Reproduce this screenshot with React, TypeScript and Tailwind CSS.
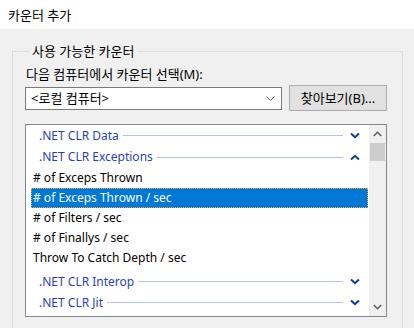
import React from "react";

const FONT = { fontFamily: '"Noto Sans", "Noto Sans CJK KR", sans-serif' };

function Chev({ up = false }: { up?: boolean }) {
  return (
    <svg width="10" height="7" viewBox="0 0 10 7" className="shrink-0">
      <path
        d={up ? "M1 5.5 L5 1.8 L9 5.5" : "M1 1.5 L5 5.2 L9 1.5"}
        fill="none"
        stroke="#12399a"
        strokeWidth="2"
      />
    </svg>
  );
}

function Header({ label, up = false, className = "" }: { label: string; up?: boolean; className?: string }) {
  return (
    <div className={`flex items-center h-[21px] pl-[13px] pr-[9px] ${className}`}>
      <span className="text-[#2b3fb2] whitespace-nowrap">{label}</span>
      <div className="flex-1 h-px bg-[#b6c2e2] ml-[4px] mr-[7px]" />
      <Chev up={up} />
    </div>
  );
}

function Item({ label, selected = false }: { label: string; selected?: boolean }) {
  return (
    <div
      className={`flex items-center h-[20px] ml-[5px] mr-[1px] px-[2px] whitespace-nowrap ${
        selected ? "bg-[#0078d7] text-white outline outline-1 outline-dotted outline-[#f7a52d] -outline-offset-1" : "text-black"
      }`}
    >
      {label}
    </div>
  );
}

export default function App() {
  return (
    <div className="w-[414px] h-[328px] overflow-hidden bg-[#f0f0f0] text-[12px] leading-[16px]" style={FONT}>
      <div className="h-[29px] bg-white flex items-center pl-[8px] text-black text-[13px]">카운터 추가</div>
      <fieldset className="ml-[12px] mr-[11px] mt-[14px] border border-[#dcdcdc] pl-[12px] pr-[15px] pt-[7px] h-[300px]">
        <legend className="ml-[4px] px-[3px] text-black text-[13px]">사용 가능한 카운터</legend>
        <div className="pl-[1px] text-black text-[13px]">다음 컴퓨터에서 카운터 선택(M):</div>
        <div className="flex items-center mt-[3px]">
          <div className="w-[257px] h-[23px] border border-[#7a7a7a] bg-white flex items-center pl-[5px] pr-[6px]">
            <span className="flex-1 text-black text-[13px]">&lt;로컬 컴퓨터&gt;</span>
            <svg width="9" height="5" viewBox="0 0 9 5">
              <path d="M0.5 0.5 L4.5 4.5 L8.5 0.5" fill="none" stroke="#606060" strokeWidth="1" />
            </svg>
          </div>
          <div className="ml-[7px] w-[98px] h-[26px] border border-[#adadad] bg-[#e1e1e1] flex items-center justify-center text-black text-[13px]">
            찾아보기(B)...
          </div>
        </div>
        <div className="mt-[13px] w-[362px] h-[193px] border border-[#828790] bg-white flex">
          <div className="flex-1 flex flex-col">
            <Header label=".NET CLR Data" />
            <Header label=".NET CLR Exceptions" up className="h-[22px]" />
            <Item label="# of Exceps Thrown" />
            <Item label="# of Exceps Thrown / sec" selected />
            <Item label="# of Filters / sec" />
            <Item label="# of Finallys / sec" />
            <Item label="Throw To Catch Depth / sec" />
            <Header label=".NET CLR Interop" className="mt-[3px]" />
            <Header label=".NET CLR Jit" />
          </div>
          <div className="w-[17px] bg-[#f0f0f0] flex flex-col">
            <div className="h-[18px] flex items-center justify-center">
              <svg width="9" height="6" viewBox="0 0 9 6">
                <path d="M0.8 5 L4.5 1.3 L8.2 5" fill="none" stroke="#606060" strokeWidth="1.6" />
              </svg>
            </div>
            <div className="mx-[1px] h-[18px] bg-[#cdcdcd]" />
            <div className="flex-1" />
            <div className="h-[18px] flex items-center justify-center">
              <svg width="9" height="6" viewBox="0 0 9 6">
                <path d="M0.8 1 L4.5 4.7 L8.2 1" fill="none" stroke="#606060" strokeWidth="1.6" />
              </svg>
            </div>
          </div>
        </div>
      </fieldset>
    </div>
  );
}
